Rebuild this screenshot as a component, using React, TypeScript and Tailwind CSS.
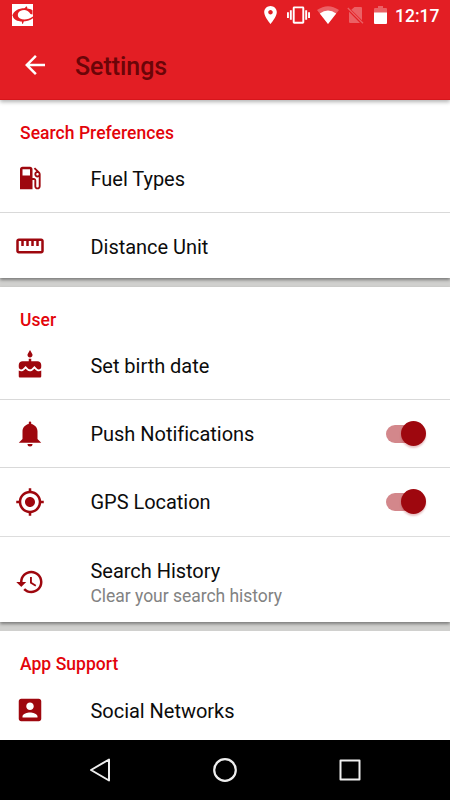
import React from "react";

const icons = {
  fuel: "M19.77 7.23l.01-.01-3.72-3.72L15 4.56l2.11 2.11c-.94.36-1.61 1.26-1.61 2.33 0 1.38 1.12 2.5 2.5 2.5.36 0 .69-.08 1-.21v7.21c0 .55-.45 1-1 1s-1-.45-1-1V14c0-1.1-.9-2-2-2h-1V5c0-1.1-.9-2-2-2H6c-1.1 0-2 .9-2 2v16h10v-7.5h1.5v5c0 1.38 1.12 2.5 2.5 2.5s2.5-1.12 2.5-2.5V9c0-.69-.28-1.32-.73-1.77zM12 10H6V5h6v5zm6 0c-.55 0-1-.45-1-1s.45-1 1-1 1 .45 1 1-.45 1-1 1z",
  ruler: "M21 6H3c-1.1 0-2 .9-2 2v8c0 1.1.9 2 2 2h18c1.1 0 2-.9 2-2V8c0-1.1-.9-2-2-2zm0 10H3V8h2v4h2V8h2v4h2V8h2v4h2V8h2v4h2V8h2v8z",
  cake: "M12 6c1.11 0 2-.9 2-2 0-.38-.1-.73-.29-1.03L12 0l-1.71 2.97c-.19.3-.29.65-.29 1.03 0 1.1.9 2 2 2zm4.6 9.99l-1.07-1.07-1.08 1.07c-1.3 1.3-3.58 1.31-4.89 0l-1.07-1.07-1.09 1.07C6.75 16.64 5.88 17 4.96 17c-.73 0-1.4-.23-1.96-.61V21c0 .55.45 1 1 1h16c.55 0 1-.45 1-1v-4.61c-.56.38-1.23.61-1.96.61-.92 0-1.79-.36-2.44-1.01zM18 9h-5V7h-2v2H6c-1.66 0-3 1.34-3 3v1.54c0 1.08.88 1.96 1.96 1.96.52 0 1.02-.2 1.38-.57l2.14-2.13 2.13 2.13c.74.74 2.03.74 2.77 0l2.14-2.13 2.13 2.13c.37.37.86.57 1.38.57 1.08 0 1.96-.88 1.96-1.96V12C21 10.34 19.66 9 18 9z",
  bell: "M14 20A2 2 0 0 1 12 22A2 2 0 0 1 10 20H14M12 2A1 1 0 0 1 13 3V4.08C15.84 4.56 18 7.03 18 10V16L21 19H3L6 16V10C6 7.03 8.16 4.56 11 4.08V3A1 1 0 0 1 12 2Z",
  gps: "M12 8c-2.21 0-4 1.79-4 4s1.79 4 4 4 4-1.79 4-4-1.79-4-4-4zm8.94 3c-.46-4.17-3.77-7.48-7.94-7.94V1h-2v2.06C6.83 3.52 3.52 6.83 3.06 11H1v2h2.06c.46 4.17 3.77 7.48 7.94 7.94V23h2v-2.06c4.17-.46 7.48-3.77 7.94-7.94H23v-2h-2.06zM12 19c-3.87 0-7-3.13-7-7s3.13-7 7-7 7 3.13 7 7-3.13 7-7 7z",
  history: "M13 3c-4.97 0-9 4.03-9 9H1l3.89 3.89.07.14L9 12H6c0-3.87 3.13-7 7-7s7 3.13 7 7-3.13 7-7 7c-1.93 0-3.68-.79-4.94-2.06l-1.42 1.42C8.27 19.99 10.51 21 13 21c4.97 0 9-4.03 9-9s-4.03-9-9-9zm-1 5v5l4.28 2.54.72-1.21-3.5-2.08V8H12z",
  account: "M3 5v14c0 1.1.89 2 2 2h14c1.1 0 2-.9 2-2V5c0-1.1-.9-2-2-2H5c-1.11 0-2 .9-2 2zm12 4c0 1.66-1.34 3-3 3s-3-1.34-3-3 1.34-3 3-3 3 1.34 3 3zm-9 8c0-2 4-3.1 6-3.1s6 1.1 6 3.1v1H6v-1z",
};

function Toggle() {
  return (
    <div className="relative mr-[24px] h-[26px] w-[40px] shrink-0">
      <div className="mt-[4px] h-[18px] w-[36px] rounded-full bg-[#d3878b]" />
      <div className="absolute right-0 top-0 size-[25px] rounded-full bg-[#9e070e] shadow-[0_2px_2px_rgba(158,7,14,0.25)]" />
    </div>
  );
}

type RowProps = {
  icon: keyof typeof icons;
  title: string;
  subtitle?: string;
  toggle?: boolean;
  className: string;
  iconClass?: string;
};

function Row({ icon, title, subtitle, toggle, className, iconClass = "" }: RowProps) {
  return (
    <div className={"flex shrink-0 items-center pl-[15px] " + className}>
      <svg viewBox="0 0 24 24" className={"size-[30px] shrink-0 " + iconClass} fill="#9e070e">
        <path d={icons[icon]} />
      </svg>
      <div className="ml-[45.5px] flex-1">
        <div className="text-[20px] leading-[26px] tracking-[-0.03px] text-[#0c0c0c]">{title}</div>
        {subtitle && <div className="text-[17.5px] leading-[24px] tracking-[-0.03px] text-[#828282]">{subtitle}</div>}
      </div>
      {toggle && <Toggle />}
    </div>
  );
}

function Section({ title, className, children }: { title: string; className: string; children: React.ReactNode }) {
  return (
    <section className={"flex shrink-0 flex-col bg-white " + className}>
      <h2 className="h-[45px] shrink-0 pl-[20px] pt-[21px] text-[17.5px] font-medium leading-[24px] tracking-[0.04px] text-[#e3040b]">{title}</h2>
      {children}
    </section>
  );
}

function StatusBar() {
  return (
    <div className="flex h-[30px] items-center pl-[12px] pr-[10px]">
      <svg className="h-[22px] w-[21px]" viewBox="0 0 21 22">
        <rect width="21" height="22" fill="#fff" />
        <path d="M20.500 6.200C16 3.600 9 3.600 4.500 6.200C-.2 9-.5 13.300 3.800 16C8 18.400 16 18 21 14.200V12.600C17 15.500 11.500 16.500 8 14.500C5 12.700 5.200 9 8.200 7.100C11.500 5.100 16 5.500 18.500 10L20.500 10.600Z" fill="#e31e24" />
        <path d="M12 5L14.300 2.300L15.300 3.200L14.800 5.500ZM9.700 16.500H12L11 19.800H10.100ZM.6 10.500H4V12H.6Z" fill="#e31e24" />
      </svg>
      <div className="ml-auto flex items-center">
        <svg className="h-[18px] w-[13px]" viewBox="5 2 14 20" fill="#fff">
          <path d="M12 2C8.130 2 5 5.130 5 9c0 5.250 7 13 7 13s7-7.750 7-13c0-3.870-3.130-7-7-7zm0 9.500c-1.380 0-2.500-1.120-2.500-2.500s1.120-2.500 2.500-2.500 2.500 1.120 2.500 2.500-1.120 2.500-2.500 2.500z" />
        </svg>
        <svg className="ml-[10px] h-[18px] w-[23px]" viewBox="0 3 24 18" fill="#fff">
          <path d="M0 15h2V9H0v6zm3 2h2V7H3v10zm19-8v6h2V9h-2zm-3 8h2V7h-2v10zM16.500 3h-9C6.670 3 6 3.670 6 4.500v15c0 .83.67 1.500 1.500 1.500h9c.83 0 1.500-.67 1.500-1.500v-15c0-.83-.67-1.500-1.500-1.500zM16 19H8V5h8v14z" />
        </svg>
        <svg className="ml-[7px] h-[18px] w-[22px]" viewBox="0 0 22 18" fill="#fff">
          <path d="M11 18L0 4Q11-3.600 22 4Z" opacity=".3" />
          <path d="M11 18L2.800 7.500Q11 1.500 19.200 7.500Z" />
        </svg>
        <svg className="ml-[8px] h-[18px] w-[17px]" viewBox="0 0 17 18">
          <path d="M7.500 1H14Q15 1 15 2V14.200L4.300 3.800ZM2 5.800L13 17H3.200Q2 17 2 16Z" fill="#eb6165" />
          <path d="M.8 2L16 17.300" stroke="#eb6165" strokeWidth="1.300" />
        </svg>
        <svg className="ml-[10px] h-[18px] w-[13px]" viewBox="0 0 13 18">
          <path d="M1 2H4V0H9V2H12Q13 2 13 3V7H0V3Q0 2 1 2Z" fill="#eb6165" />
          <path d="M0 6.500H13V17Q13 18 12 18H1Q0 18 0 17Z" fill="#fff" />
        </svg>
        <span className="ml-[8px] w-[45px] whitespace-nowrap pt-[2px] text-[17.5px] font-medium leading-[24px] text-white">12:17</span>
      </div>
    </div>
  );
}

export default function App() {
  return (
    <div className="flex h-[800px] w-[450px] flex-col overflow-hidden bg-[#d0d0ce] font-['Roboto',sans-serif]">
      <header className="relative z-10 h-[100px] shrink-0 border-b border-[#d7151b] bg-[#e31e24] shadow-[0_2px_4px_rgba(0,0,0,0.3)]">
        <StatusBar />
        <div className="flex h-[70px] items-center pl-[20px]">
          <svg viewBox="0 0 24 24" className="size-[30px]" fill="#fff">
            <path d="M20 11H7.830l5.590-5.590L12 4l-8 8 8 8 1.410-1.410L7.830 13H20v-2z" />
          </svg>
          <h1 className="ml-[25px] pt-[3px] text-[25px] font-medium leading-[30px] tracking-[-0.05px] text-[#6b0508]">Settings</h1>
        </div>
      </header>
      <main className="flex min-h-0 flex-1 flex-col overflow-hidden">
        <Section title="Search Preferences" className="h-[178px] shadow-[0_2px_3px_rgba(0,0,0,0.4)]">
          <Row icon="fuel" title="Fuel Types" className="h-[68px] border-b border-[#d9d9d9]" iconClass="mb-[2px]" />
          <Row icon="ruler" title="Distance Unit" className="h-[65px] pt-[3px]" iconClass="mb-[2px]" />
        </Section>
        <Section title="User" className="mt-[9px] h-[335px] shadow-[0_2px_3px_rgba(0,0,0,0.4)]">
          <Row icon="cake" title="Set birth date" className="h-[68px] border-b border-[#d9d9d9]" iconClass="mb-[2px]" />
          <Row icon="bell" title="Push Notifications" toggle className="h-[68px] border-b border-[#d9d9d9]" />
          <Row icon="gps" title="GPS Location" toggle className="h-[68.500px] border-b border-[#dddddd]" />
          <Row icon="history" title="Search History" subtitle="Clear your search history" className="h-[85.500px] pt-[8px]" iconClass="mb-[3px]" />
        </Section>
        <Section title="App Support" className="mt-[9px] h-[120px]">
          <Row icon="account" title="Social Networks" className="h-[68px] pt-[1px]" iconClass="mb-[2px]" />
        </Section>
      </main>
      <nav className="z-10 flex h-[60px] shrink-0 items-center justify-between bg-black px-[85px]">
        <svg viewBox="0 0 30 30" className="size-[30px]" fill="none" stroke="#eee" strokeWidth="2" strokeLinejoin="round">
          <path d="M24 4.500V25.500L6 15Z" />
        </svg>
        <svg viewBox="0 0 30 30" className="size-[30px]" fill="none" stroke="#eee" strokeWidth="2.200">
          <circle cx="15" cy="15" r="10.800" />
        </svg>
        <svg viewBox="0 0 30 30" className="size-[30px]" fill="none" stroke="#eee" strokeWidth="2" strokeLinejoin="round">
          <path d="M5.500 5.500H24.500V24.500H5.500Z" />
        </svg>
      </nav>
    </div>
  );
}
